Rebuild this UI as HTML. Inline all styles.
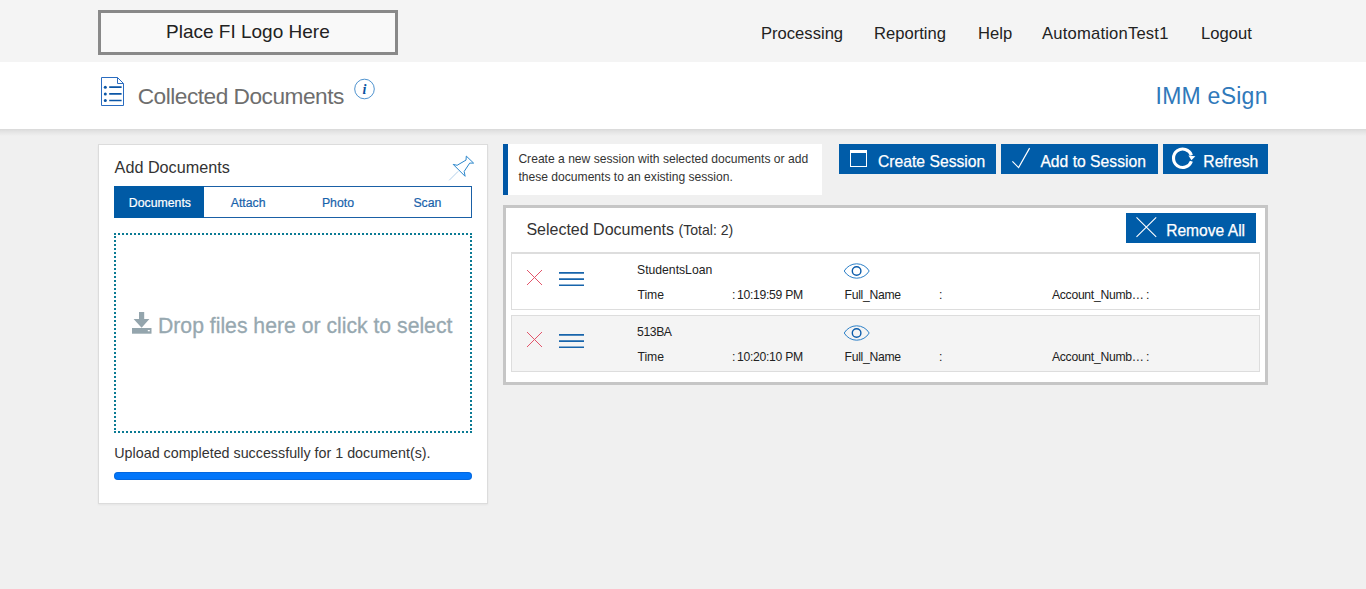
<!DOCTYPE html>
<html><head><meta charset="utf-8">
<style>
*{margin:0;padding:0;box-sizing:border-box}
html,body{width:1366px;height:589px;overflow:hidden;background:#f0f0f0;font-family:"Liberation Sans",sans-serif;position:relative}
.a{position:absolute}
.t{position:absolute;white-space:nowrap;line-height:1}
#hdr{left:0;top:0;width:1366px;height:62px;background:#f4f4f4}
#band{left:0;top:62px;width:1366px;height:67px;background:#fff}
#shad{left:0;top:129px;width:1366px;height:7px;background:linear-gradient(#d9d9d9,#e3e3e3 35%,#f0f0f0)}
#logo{left:98px;top:10px;width:300px;height:45px;border:3px solid #898989;background:#f9f9f9}
.nav{font-size:16.6px;color:#222}
#panel{left:98px;top:144px;width:390px;height:360px;background:#fff;border:1px solid #dcdcdc;box-shadow:0 1px 2px rgba(0,0,0,0.05)}
#tabs{left:114px;top:186px;width:358px;height:32px;border:1px solid #1a60a6;background:#fff}
#tabact{left:114px;top:186px;width:90px;height:32px;background:#005aa5}
.tab{font-size:12.3px;color:#1862ab;-webkit-text-stroke:0.2px currentColor}
#drop{left:114px;top:233px;width:358px;height:200px;border:2px dotted #0b7a93}
#prog{left:114px;top:472px;width:358px;height:8px;border-radius:4px;background:#0276fa;box-shadow:inset 0 0 0 1px rgba(10,60,140,0.25)}
#info{left:503px;top:144px;width:319px;height:51px;background:#fff;border-left:5px solid #0057a6}
.btn{position:absolute;top:144px;height:30px;background:#005ca8}
.bt{font-size:15.7px;color:#fff;-webkit-text-stroke:0.25px #fff}
#sel{left:503px;top:205px;width:765px;height:180px;border:3px solid #c6c6c6;background:#fff}
.row{position:absolute;left:511px;width:749px;height:57px;border:1px solid #dddddd}
.rt{font-size:12.2px;color:#222}
</style></head><body>
<div class="a" id="hdr"></div>
<div class="a" id="band"></div>
<div class="a" id="shad"></div>
<div class="a" id="logo"></div>
<div class="t" style="left:166px;top:22.4px;font-size:19px;color:#222">Place FI Logo Here</div>
<div class="t nav" style="left:761px;top:26.3px">Processing</div>
<div class="t nav" style="left:874px;top:26.3px">Reporting</div>
<div class="t nav" style="left:978px;top:26.3px">Help</div>
<div class="t nav" style="left:1042px;top:26.3px;letter-spacing:0.2px">AutomationTest1</div>
<div class="t nav" style="left:1201px;top:26.3px">Logout</div>

<!-- doc icon -->
<svg class="a" style="left:100px;top:76px" width="26" height="32" viewBox="0 0 26 32">
<path d="M1.5 1.5 H17.5 L23.5 7.5 V29.5 H1.5 Z" fill="none" stroke="#2a6cc0" stroke-width="1"/>
<path d="M17.5 1.5 V7.5 H23.5" fill="none" stroke="#2a6cc0" stroke-width="1"/>
<circle cx="5.3" cy="11.2" r="1.5" fill="#0b56a6"/><circle cx="5.3" cy="17.9" r="1.5" fill="#0b56a6"/><circle cx="5.3" cy="24.5" r="1.5" fill="#0b56a6"/>
<path d="M9.2 11.2 H21.6 M9.2 17.9 H21.6 M9.2 24.5 H21.6" stroke="#0b56a6" stroke-width="1.7"/>
</svg>
<div class="t" style="left:137.7px;top:85px;font-size:22.7px;letter-spacing:-0.5px;color:#6e6e6e">Collected Documents</div>
<svg class="a" style="left:353px;top:78px" width="23" height="23" viewBox="0 0 23 23">
<circle cx="11.5" cy="11" r="9.8" fill="none" stroke="#3a86c8" stroke-width="0.9"/>
<text x="11.5" y="16.2" text-anchor="middle" font-family="Liberation Serif" font-style="italic" font-weight="bold" font-size="14" fill="#0a52a0">i</text>
</svg>
<div class="t" style="left:1155.5px;top:84.5px;font-size:23px;color:#3079ba;letter-spacing:0.25px">IMM eSign</div>

<!-- left panel -->
<div class="a" id="panel"></div>
<div class="t" style="left:114.6px;top:158.9px;font-size:16.2px;color:#333">Add Documents</div>
<svg class="a" style="left:444px;top:150px" width="36" height="36" viewBox="0 0 36 36">
<path d="M5.2 30.3 L14.2 21.3" stroke="#b3d0ea" stroke-width="1"/>
<path d="M9.2 14.4 L21.1 26.3 M9.2 14.4 L13.1 15.3 L22 10.1 L22.3 6.1 L29.6 13.1 L25.7 13.1 L20.2 21.4 L21.1 26.3" fill="none" stroke="#2a86cc" stroke-width="1" stroke-linejoin="round"/>
</svg>
<div class="a" id="tabs"></div>
<div class="a" id="tabact"></div>
<div class="t tab" style="left:128.8px;top:197px;color:#fff">Documents</div>
<div class="t tab" style="left:230.7px;top:197px">Attach</div>
<div class="t tab" style="left:321.9px;top:197px">Photo</div>
<div class="t tab" style="left:413.4px;top:197px">Scan</div>
<div class="a" id="drop"></div>
<svg class="a" style="left:131px;top:311px" width="22" height="24" viewBox="0 0 22 24">
<path d="M8 1 H13.2 V8 H18.4 L10.6 16.7 L2.6 8 H8 Z" fill="#94a5ad"/>
<rect x="1" y="17" width="19.5" height="5.7" fill="#94a5ad"/>
<rect x="16.8" y="19" width="2" height="1.3" fill="#fff"/>
</svg>
<div class="t" style="left:158px;top:315.1px;font-size:21.2px;color:#97a8b0;-webkit-text-stroke:0.3px #97a8b0">Drop files here or click to select</div>
<div class="t" style="left:114.3px;top:445.6px;font-size:14.3px;color:#333">Upload completed successfully for 1 document(s).</div>
<div class="a" id="prog"></div>

<!-- right -->
<div class="a" id="info"></div>
<div class="t" style="left:518.4px;top:152.7px;font-size:12.1px;color:#333">Create a new session with selected documents or add</div>
<div class="t" style="left:518.4px;top:170.6px;font-size:12.1px;color:#333">these documents to an existing session.</div>

<div class="btn" style="left:839px;width:157px"></div>
<svg class="a" style="left:849px;top:149px" width="19" height="19" viewBox="0 0 19 19">
<rect x="1.5" y="1.5" width="16" height="16" fill="none" stroke="#fff" stroke-width="1"/>
<rect x="1" y="1" width="17" height="3" fill="#fff"/>
</svg>
<div class="t bt" style="left:878px;top:153.5px">Create Session</div>

<div class="btn" style="left:1001px;width:157px"></div>
<svg class="a" style="left:1010px;top:146px" width="22" height="24" viewBox="0 0 22 24">
<path d="M2.4 15.4 L8.6 21.6 L19.6 2.1" fill="none" stroke="#fff" stroke-width="1.2"/>
</svg>
<div class="t bt" style="left:1040.4px;top:153.5px">Add to Session</div>

<div class="btn" style="left:1163px;width:105px"></div>
<svg class="a" style="left:1165px;top:142px" width="36" height="32" viewBox="0 0 36 32">
<path d="M26.4 19.3 A9.2 9.2 0 1 1 26.4 13.2" fill="none" stroke="#fff" stroke-width="3.1"/>
<path d="M23.4 13.6 L30.4 14.2 L26.4 18.2 Z" fill="#fff"/>
</svg>
<div class="t bt" style="left:1203.3px;top:153.5px">Refresh</div>

<div class="a" id="sel"></div>
<div class="t" style="left:526.4px;top:222.2px;font-size:16px;color:#333">Selected Documents <span style="font-size:14.1px">(Total: 2)</span></div>
<div class="btn" style="left:1126px;top:213px;width:130px"></div>
<svg class="a" style="left:1134px;top:215px" width="25" height="25" viewBox="0 0 25 25">
<path d="M2.5 2.3 L22.2 21.8 M22.2 2.3 L2.5 21.8" stroke="#fff" stroke-width="1.1"/>
</svg>
<div class="t bt" style="left:1166.2px;top:223.2px;font-size:15.6px">Remove All</div>

<div class="row" style="top:252px;height:58px;border-top-width:2px;background:#fff"></div>
<div class="row" style="top:315px;background:#f4f4f4"></div>

<!-- row 1 -->
<svg class="a" style="left:526px;top:269px" width="17" height="17" viewBox="0 0 17 17">
<path d="M1 1 L16 16 M16 1 L1 16" stroke="#e2546a" stroke-width="1"/>
</svg>
<svg class="a" style="left:558px;top:270px" width="27" height="18" viewBox="0 0 27 18">
<path d="M1 2.9 H26 M1 9.1 H26 M1 15.3 H26" stroke="#1764ab" stroke-width="1.6"/>
</svg>
<div class="t rt" style="left:637px;top:263.7px">StudentsLoan</div>
<svg class="a" style="left:843px;top:262px" width="28" height="18" viewBox="0 0 28 18">
<path d="M1.2 9 A14.45 14.45 0 0 1 26.2 9 A14.45 14.45 0 0 1 1.2 9 Z" fill="none" stroke="#2c80c8" stroke-width="1"/>
<circle cx="13.6" cy="9" r="4.3" fill="none" stroke="#0b5cab" stroke-width="1.4"/>
</svg>
<div class="t rt" style="left:637.4px;top:288.6px">Time</div>
<div class="t rt" style="left:731.9px;top:288.6px">:</div><div class="t rt" style="left:737px;top:288.6px;letter-spacing:-0.3px">10:19:59 PM</div>
<div class="t rt" style="left:844.6px;top:288.6px;letter-spacing:-0.3px">Full_Name</div>
<div class="t rt" style="left:939px;top:288.6px">:</div>
<div class="t rt" style="left:1052px;top:288.6px;letter-spacing:-0.3px">Account_Numb…</div><div class="t rt" style="left:1146px;top:288.6px">:</div>

<!-- row 2 -->
<svg class="a" style="left:526px;top:331px" width="17" height="17" viewBox="0 0 17 17">
<path d="M1 1 L16 16 M16 1 L1 16" stroke="#e2546a" stroke-width="1"/>
</svg>
<svg class="a" style="left:558px;top:332px" width="27" height="18" viewBox="0 0 27 18">
<path d="M1 2.9 H26 M1 9.1 H26 M1 15.3 H26" stroke="#1764ab" stroke-width="1.6"/>
</svg>
<div class="t rt" style="left:637px;top:326.4px;letter-spacing:-0.4px">513BA</div>
<svg class="a" style="left:843px;top:324px" width="28" height="18" viewBox="0 0 28 18">
<path d="M1.2 9 A14.45 14.45 0 0 1 26.2 9 A14.45 14.45 0 0 1 1.2 9 Z" fill="none" stroke="#2c80c8" stroke-width="1"/>
<circle cx="13.6" cy="9" r="4.3" fill="none" stroke="#0b5cab" stroke-width="1.4"/>
</svg>
<div class="t rt" style="left:637.4px;top:351.4px">Time</div>
<div class="t rt" style="left:731.9px;top:351.4px">:</div><div class="t rt" style="left:737px;top:351.4px;letter-spacing:-0.3px">10:20:10 PM</div>
<div class="t rt" style="left:844.6px;top:351.4px;letter-spacing:-0.3px">Full_Name</div>
<div class="t rt" style="left:939px;top:351.4px">:</div>
<div class="t rt" style="left:1052px;top:351.4px;letter-spacing:-0.3px">Account_Numb…</div><div class="t rt" style="left:1146px;top:351.4px">:</div>
</body></html>
